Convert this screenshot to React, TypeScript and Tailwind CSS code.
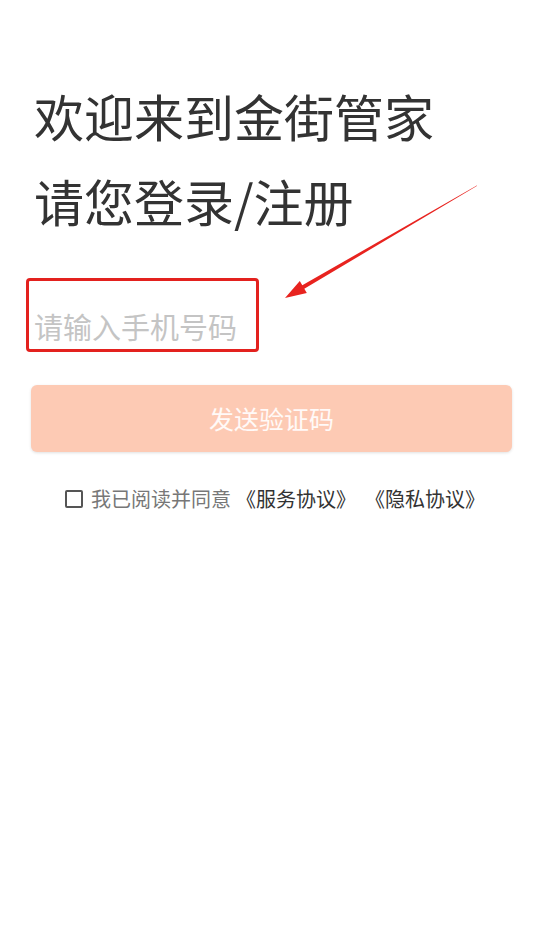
import { useState } from "react";

const cjk = { fontFamily: '"Noto Sans CJK SC", "Noto Sans", sans-serif' };

// 截图里的红色标注箭头：尾部细、靠近箭头处变粗
function AnnotationArrow() {
  return (
    <svg
      className="pointer-events-none absolute left-0 top-0"
      width="545"
      height="951"
      viewBox="0 0 545 951"
    >
      <polygon
        points="477.2,185.8 476.8,185.5 302.3,285.3 299.8,281 285,298 306.8,293.1 304.3,288.7"
        fill="#e8231f"
      />
    </svg>
  );
}

export default function App() {
  const [phone, setPhone] = useState("");
  const [agreed, setAgreed] = useState(false);

  return (
    <div className="relative min-h-[951px] w-full bg-white" style={cjk}>
      <div className="px-[34px] pt-[73px]">
        <h1 className="text-[50px] leading-[85px] font-normal text-[#333333]">
          欢迎来到金街管家
          <br />
          请您登录/注册
        </h1>
      </div>

      <div className="relative mt-[35px] px-[34px]">
        <input
          value={phone}
          onChange={(e) => setPhone(e.target.value)}
          placeholder="请输入手机号码"
          className="h-[74px] w-full bg-transparent pt-[22px] text-[29px] text-[#333] outline-none placeholder:text-[#c4c4c4]"
        />
        <div className="pointer-events-none absolute left-[26px] top-0 h-[74px] w-[233px] rounded-[4px] border-[3px] border-[#e3211e]" />
      </div>

      <div className="pl-[31px] pr-[33px] pt-[33px]">
        <button
          type="button"
          className="h-[67px] w-full rounded-[6px] bg-[#fdcab4] text-[25px] text-white/90 shadow-[0_1px_3px_rgba(0,0,0,0.12)]"
        >
          发送验证码
        </button>
      </div>

      <div className="mt-[32px] flex items-center justify-center pl-[5px] text-[20px]">
        <button
          type="button"
          onClick={() => setAgreed(!agreed)}
          className="mr-[8px] h-[18px] w-[18px] rounded-[2px] border-2 border-[#555]"
          aria-label="同意协议"
        >
          {agreed ? <span className="block h-full w-full bg-[#555]" /> : null}
        </button>
        <span className="text-[#777]">我已阅读并同意</span>
        <span className="ml-[5px] text-[#333]">《服务协议》</span>
        <span className="ml-[9px] text-[#333]">《隐私协议》</span>
      </div>

      <AnnotationArrow />
    </div>
  );
}
